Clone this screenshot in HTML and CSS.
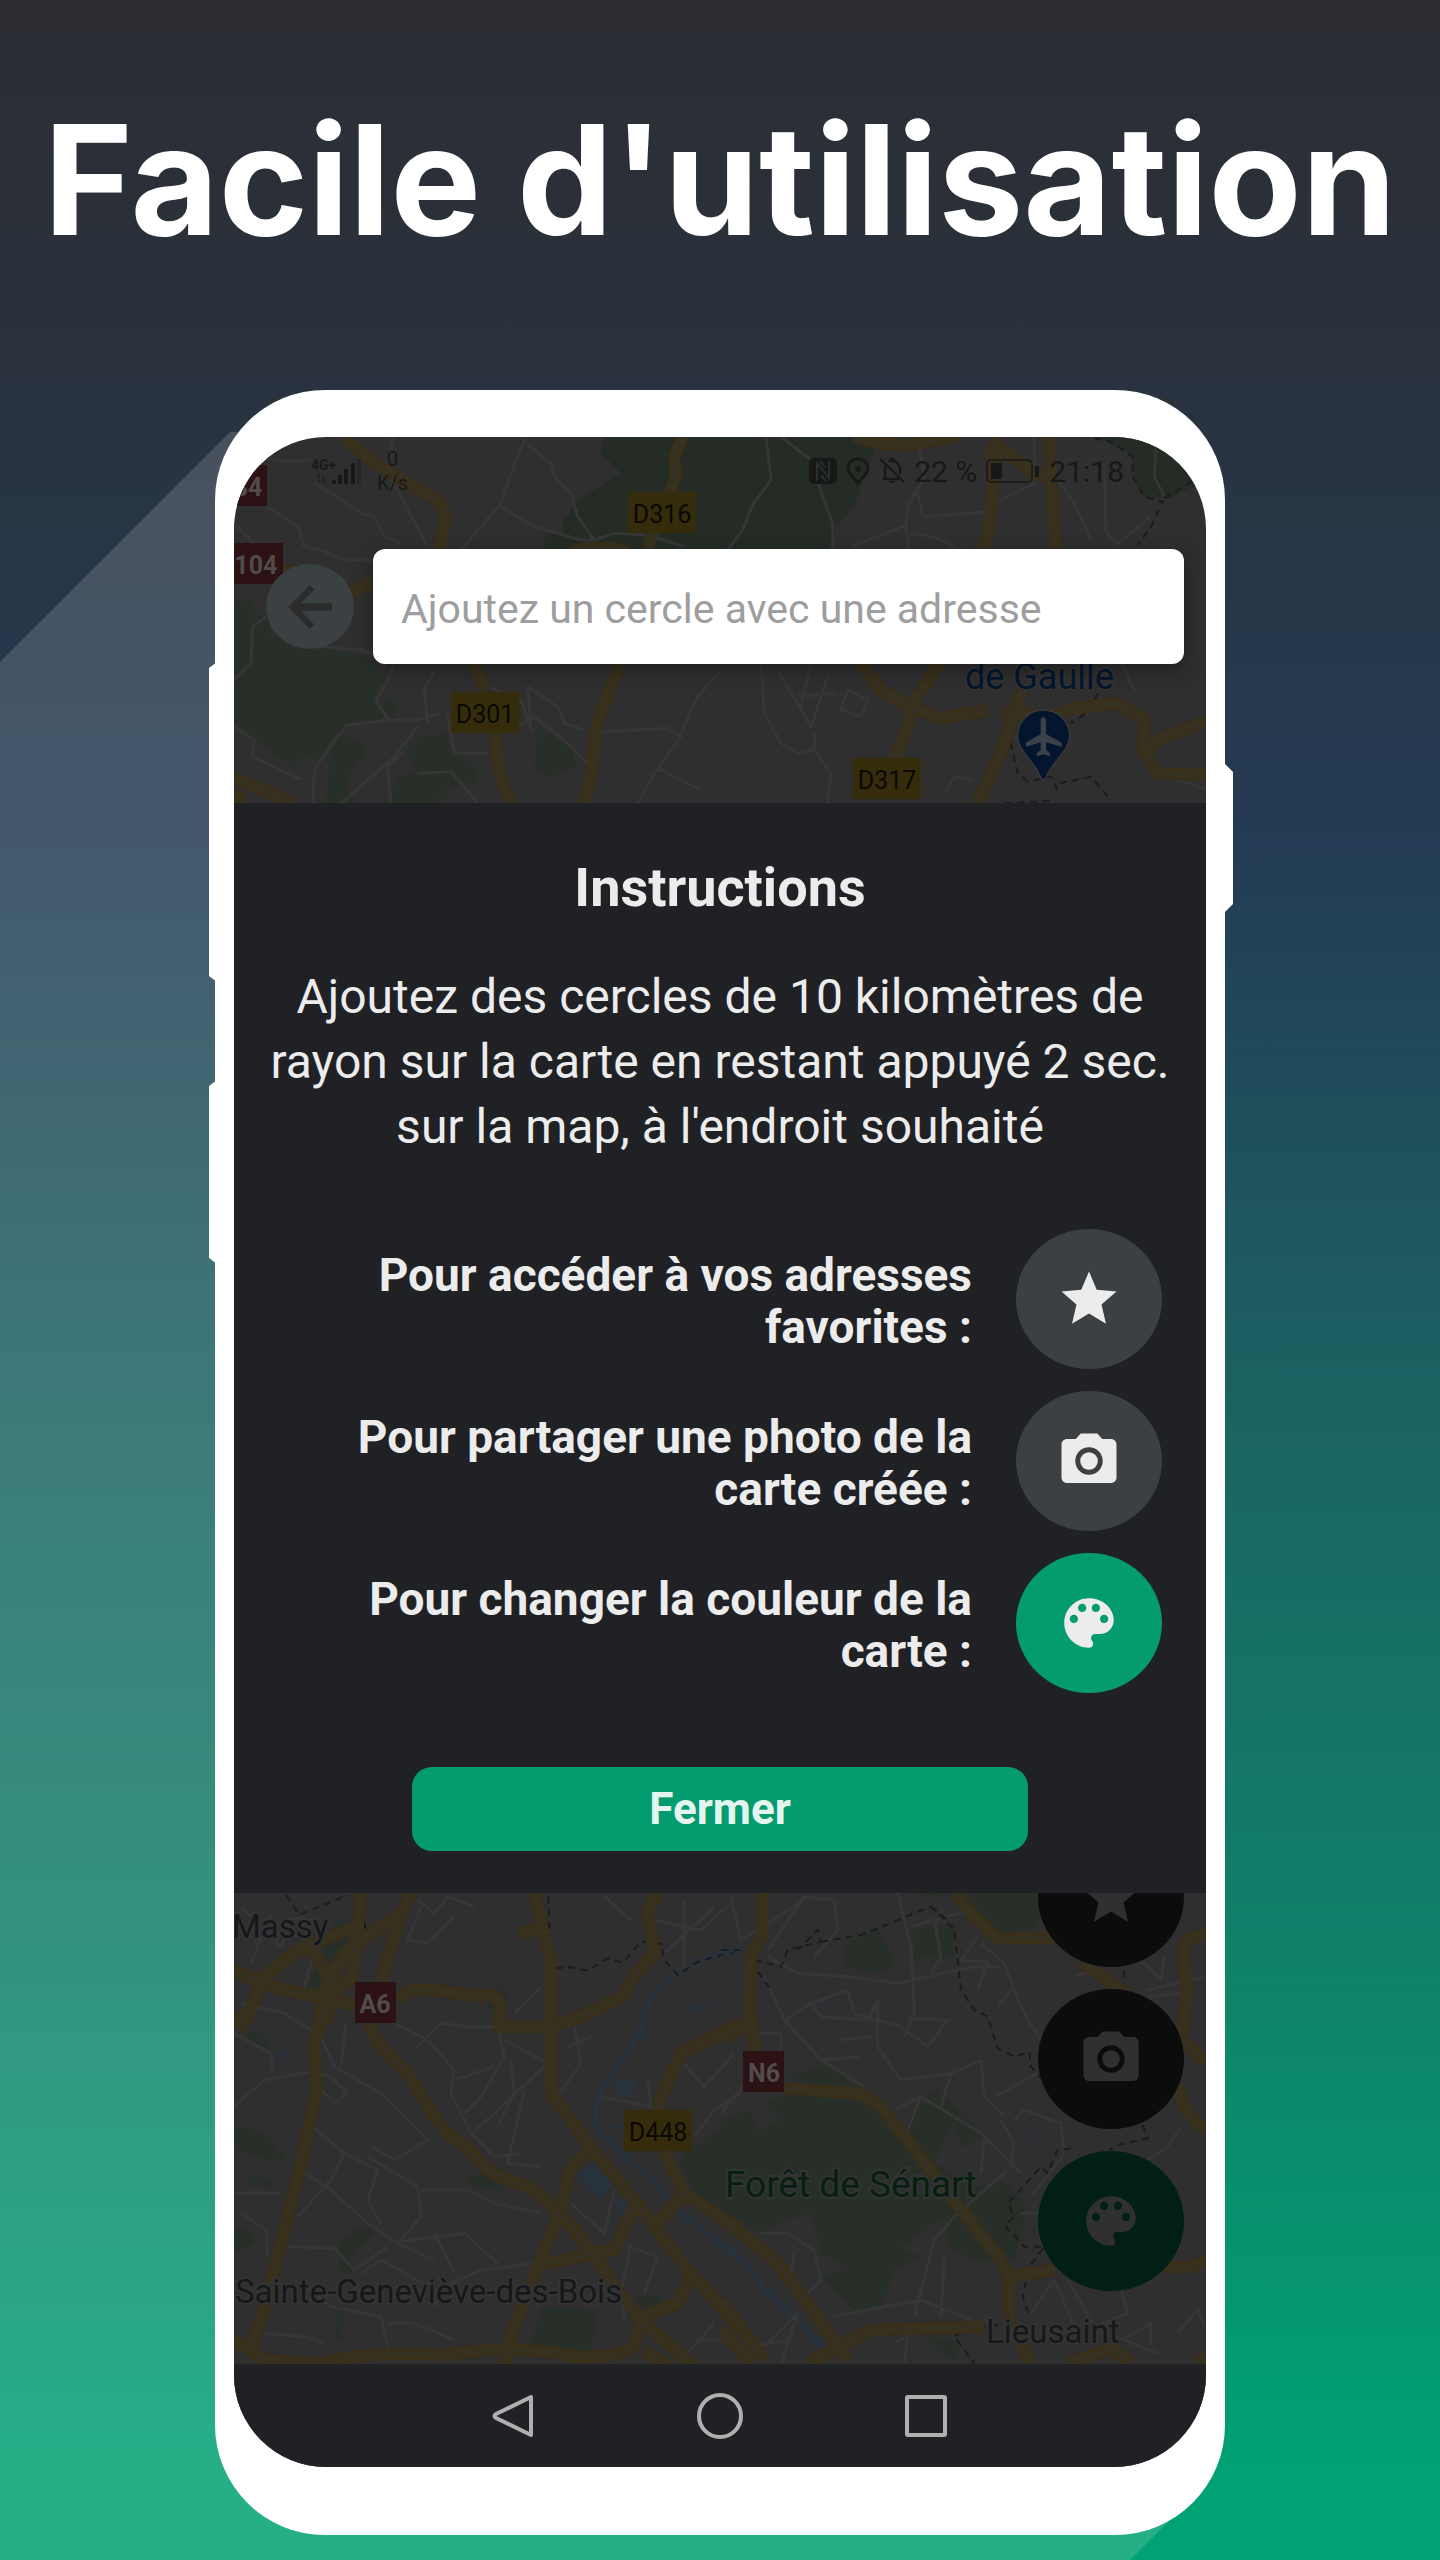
FILE: index.html
```
<!DOCTYPE html>
<html lang="fr">
<head>
    <meta charset="UTF-8">
    <meta name="viewport" content="width=device-width, initial-scale=1.0">
    <title>Facile d'utilisation</title>
    <link rel="stylesheet" href="styles.css">
</head>
<body>
    <!-- shared icons -->
    <svg class="sprite" aria-hidden="true">
        <symbol id="icon-star" viewBox="0 0 24 24">
            <path d="M12 17.27L18.18 21l-1.64-7.03L22 9.24l-7.19-.61L12 2 9.19 8.63 2 9.24l5.46 4.73L5.82 21z"/>
        </symbol>
        <symbol id="icon-camera" viewBox="0 0 24 24">
            <circle cx="12" cy="12" r="3.2"/>
            <path d="M9 2L7.17 4H4c-1.1 0-2 .9-2 2v12c0 1.1.9 2 2 2h16c1.1 0 2-.9 2-2V6c0-1.1-.9-2-2-2h-3.17L15 2H9zm3 15c-2.76 0-5-2.24-5-5s2.24-5 5-5 5 2.24 5 5-2.24 5-5 5z"/>
        </symbol>
        <symbol id="icon-palette" viewBox="0 0 24 24">
            <path d="M12 3c-4.97 0-9 4.03-9 9s4.03 9 9 9c.83 0 1.5-.67 1.5-1.5 0-.39-.15-.74-.39-1.01-.23-.26-.38-.61-.38-.99 0-.83.67-1.5 1.5-1.5H16c2.76 0 5-2.24 5-5 0-4.42-4.03-8-9-8zm-5.5 9c-.83 0-1.5-.67-1.5-1.5S5.67 9 6.5 9 8 9.67 8 10.5 7.33 12 6.5 12zm3-4C8.67 8 8 7.33 8 6.5S8.67 5 9.5 5s1.5.67 1.5 1.5S10.33 8 9.5 8zm5 0c-.83 0-1.5-.67-1.5-1.5S13.67 5 14.5 5s1.5.67 1.5 1.5S15.33 8 14.5 8zm3 4c-.83 0-1.5-.67-1.5-1.5S16.67 9 17.5 9s1.5.67 1.5 1.5-.67 1.5-1.5 1.5z"/>
        </symbol>
    </svg>

    <main class="promo">
        <h1>Facile d'utilisation</h1>

        <div class="phone">
            <span class="side-button volume"></span>
            <span class="side-button power"></span>
            <span class="side-button lock"></span>

            <div class="screen">
                <svg class="map" viewBox="0 0 972 2030" preserveAspectRatio="xMidYMin slice" aria-hidden="true">
                    <!-- main roads, drawn twice: casing then fill -->
                    <defs>
                        <g id="roads-nw">
                            <path d="M425 170Q540 270 690 350Q738 372 730 430L715 510"/>
                            <path d="M1445 170L1420 230 1425 290 1405 340M1355 455L1340 510"/>
                            <path d="M245 567L300 580M445 640L515 605"/>
                            <path d="M820 850L850 930M880 1060L900 1200 930 1275"/>
                            <path d="M1260 850L1190 1020 1175 1150 1150 1275"/>
                            <path d="M98 1195L200 1235 280 1275M98 1235L130 1275"/>
                            <path d="M1110 515Q1190 490 1280 515"/>
                        </g>
                        <g id="roads-ne">
                            <path d="M400 170L480 190 570 198 640 180 720 165"/>
                            <path d="M825 170V215L805 430 790 510M790 215H860L940 285 1000 290M985 170L990 290 1003 510"/>
                            <path d="M420 850L480 930 560 980 660 1015 800 990M655 850L570 980 560 1040 520 1135"/>
                            <path d="M905 920L840 1120 770 1270M840 1000L900 1000 990 1010 1060 985 1190 970 1270 1020 1265 1110 1310 1180 1455 1185M1275 1110L1330 1070 1455 1025"/>
                        </g>
                        <g id="roads-sw">
                            <path d="M38 270Q150 330 290 350L400 375M530 355L570 330 640 330 740 345 820 345 840 380 835 440H990L1090 405 1210 345 1235 290 1300 220 1280 90 1310 38"/>
                            <path d="M575 38L540 100 470 145 370 220 310 330 290 450 280 480 285 640 240 850 140 1250 85 1420M540 100L480 305M420 38L395 290 340 340M395 145L230 210 130 290 90 390 55 450M38 430L90 390M265 205L350 320 310 430"/>
                            <path d="M940 38L960 130 990 240V460L990 640 1100 790 1250 975 1410 1180 1560 1350M890 160L960 150"/>
                            <path d="M448 430Q450 480 560 580Q640 720 690 770Q730 790 790 860Q820 890 910 915Q1010 980 1060 1050Q1140 1150 1190 1230L1260 1320 1420 1460"/>
                            <path d="M1560 430L1380 520 1325 640 1310 690M1330 815L1390 940 1310 1030M1390 940L1560 1050"/>
                            <path d="M1110 805L1045 870 1020 990 960 1130 870 1370 850 1460M950 1155L1180 1110 1240 980M1410 1190L1370 1270 1260 1310 1240 1400Q1150 1450 1010 1420Q840 1395 680 1425Q450 1410 300 1450L130 1440 38 1380M1270 1410L1340 1460"/>
                        </g>
                        <g id="roads-se">
                            <path d="M125 38V170L90 220 85 390 105 510M0 475L90 430"/>
                            <path d="M700 38L760 110 830 175H1000M1080 245L1220 340M1455 165Q1385 170 1385 220L1400 330 1380 480 1455 545M1370 610Q1380 700 1455 750"/>
                            <path d="M192 625L400 640Q460 650 520 730L690 950 840 1140 865 1190V1330L930 1450M865 1190L1000 1170M1320 1160L1400 1162 1455 1145"/>
                            <path d="M0 1010L170 1150 260 1270 380 1440M0 1260L130 1440M260 1450L450 1350 790 1340M0 1350L90 1450M1040 1450L1170 1405 1230 1450M1430 1450L1455 1430"/>
                        </g>
                    </defs>

                    <!-- north west -->
                    <svg x="-33" y="-57" width="520" height="430" viewBox="0 0 1560 1290">
                        <path class="wood" d="M1210 170H1560V510H1025L1035 460 1090 465 1085 430 1130 360 1260 280 1215 235 1198 225Z"/>
                        <path class="park" d="M98 660L150 665 165 710 200 700 210 770 400 810 500 835 540 890 525 960 560 1020 440 1030 400 1080 350 1140 300 1125 275 1165 200 1105 98 1030Z"/>
                        <path class="park" d="M420 1065L495 1090 485 1130 455 1170 430 1215 460 1270H375L390 1110Z"/>
                        <path class="park" d="M615 1115L660 1070 735 1060 750 1110 820 1160 830 1200 740 1230 700 1270H560L590 1190 650 1180Z"/>
                        <path class="park" d="M1010 1040L1100 1080 1130 1160 1040 1195 1000 1160ZM550 950L590 970 580 1020 545 990Z"/>
                        <path class="street" d="M200 235L260 245 330 240M340 310L400 345 480 400 520 410 550 470 600 490M98 430L160 490M200 380L290 440 310 500 360 510 430 540 515 540M575 170L560 280 600 350 680 500M975 170L930 280 900 370 780 510M900 380L1000 440 1140 480 1180 480 1240 460 1340 465 1450 500M975 190L1050 250 1060 290 1110 340 1130 410 1180 480"/>
                        <path class="street" d="M195 710L155 740 150 850 98 900M98 1040L160 1080 155 1130 300 1200M360 800L480 810 580 850 560 900 525 960 560 1020 650 1020 720 1000M700 870L670 930 680 1030M400 1080L440 1035 560 1020M650 1040L580 1130 420 1270M400 1080L340 1170 335 1270M610 1115L560 1160 570 1270M650 1180L750 1175 830 1270M740 1000L760 1120 860 1120M860 920L960 960 990 1050 980 920 1070 980 1090 1030 1150 1050M920 1060L1000 1010 1100 1090 1160 1150M1190 1055L1400 1045 1440 1070 1370 1165 1310 1270M1440 1060L1490 950 1560 870M1370 1165L1500 1230"/>
                        <use class="road-casing" href="#roads-nw"/>
                        <use class="road-fill" href="#roads-nw"/>
                    </svg>

                    <!-- north east -->
                    <svg x="487" y="-57" width="520" height="430" viewBox="0 0 1560 1290">
                        <path class="wood" d="M0 170H475L430 290 400 380 340 450 325 510H0Z"/>
                        <path class="wood" d="M1120 170H1250L1460 270V300L1340 355 1270 350 1240 300 1230 220Z"/>
                        <path class="street" d="M135 170L150 300 95 375 65 450 20 510M180 170L270 240 305 350 335 430V510M595 200L610 290 560 380 555 450 565 510M560 435L390 500M590 340L605 410 800 395M565 460L640 470 720 510M820 370L940 310 940 170M1010 300L1060 370 1110 480M1150 250L1155 460 1190 490 1290 410M1305 210L1300 290 1330 350"/>
                        <path class="street" d="M120 850L130 1000 180 1090 230 1120 280 1110M170 870L270 1040 320 890M230 950L340 940M380 930L440 960 420 1010 360 990ZM270 850L240 980M280 1060V1110L330 1180 320 1270M1200 850L1245 940M1310 1190H1455M1350 1190L1460 1230M670 1240L700 1190 760 1200"/>
                        <path class="border" d="M1120 175L1170 185 1235 230 1235 290 1270 350 1325 365 1290 440 1250 495M1330 355L1420 300M1130 940L1110 990 1050 1030M860 1050L890 1180 920 1205 990 1190 1015 1240M1015 1210L1110 1190 1160 1250M850 1270L1000 1262"/>
                        <use class="road-casing" href="#roads-ne"/>
                        <use class="road-fill" href="#roads-ne"/>
                        <path class="pin" d="M967 990c-43 0-77 34-77 78 0 45 50 75 68 122 4 12 14 12 18 0 18-47 70-77 70-122 0-44-35-78-79-78z"/>
                        <path class="plane" d="M967 1012q-8 0-8 12v38l-44 26v12l44-13v23l-12 10v9l20-6 20 6v-9l-12-10v-23l47 13v-12l-47-26v-38q0-12-8-12z"/>
                    </svg>

                    <!-- south west -->
                    <svg x="-13" y="1443" width="520" height="500" viewBox="0 0 1560 1500">
                        <path class="park" d="M300 200L350 120 400 130 370 200 330 260ZM255 330L290 260 330 300 300 340ZM75 450L130 465 140 500 85 495ZM38 740L120 750 195 835 140 840 38 805ZM65 915L100 880 165 920ZM38 1040L90 1050 100 1090 38 1120ZM355 1090L400 1050 480 1040 400 1120 390 1180 355 1180ZM740 890L800 880 840 930 760 920ZM560 1030L590 980 600 990ZM960 1280L1130 1290 1110 1420 930 1400ZM1560 690L1480 760 1390 820 1370 850 1420 940 1510 1010H1560ZM790 370L850 320 860 350 820 390ZM320 1270L370 1280 360 1380 345 1380 345 1300ZM1230 1250L1310 1245 1330 1280 1270 1285Z"/>
                        <path class="water" d="M1385 395L1480 360 1430 400ZM1180 605L1250 598 1230 650 1180 640ZM1070 880L1115 850 1175 905 1140 960 1110 930ZM1170 950L1240 985 1200 1010ZM175 520L195 512 200 535 185 542ZM1165 735L1205 730 1195 755ZM1250 465L1290 460 1270 480Z"/>
                        <path class="river" d="M1560 205Q1400 240 1340 300Q1270 370 1265 430Q1240 500 1150 620Q1100 700 1140 760L1300 910 1380 1000 1560 1140"/>
                        <path class="street" d="M60 80L180 200 200 150M38 160L250 110M90 250L150 100M590 60L640 100 680 50 760 80M600 80L560 180 620 190 700 110M1150 50L1230 120M1390 60V260M1300 120L1440 150 1540 60M1330 220L1480 80M280 220L240 350M60 370L190 400 300 470M38 460L150 520 155 570M38 680L130 600 270 575 330 590 380 640 340 670 300 630M300 470L340 560 480 640 620 780 520 840 450 800M375 430L360 560M500 420L620 480 700 570 690 640 750 760 820 830 900 820M580 510L660 430 740 440H830L850 530 780 650 730 700M700 600L820 560M850 480L980 550 820 700 750 760M870 540L880 640 830 740M910 630L860 850 960 860M1060 440L1080 550 1010 650M1040 500L1110 470M880 400L960 320"/>
                        <path class="street" d="M250 720L370 820 330 900 230 1010M245 875L330 930 440 1030 530 1090 640 1140M370 820L470 870 440 960 480 1030M530 1090L600 1010 590 920 440 830M600 930L740 930 820 970 960 1000M530 1085L730 1060 830 1150M640 1060L700 1180M200 1100L340 1105 400 1170 500 1100M38 940H180M60 1000L135 1050 140 1130M420 1180L480 1140 640 1230 780 1170 940 1150M220 1200L330 1280 480 1310 500 1400M500 1330H580L700 1380M640 1280L680 1210M130 1360L250 1370 310 1390M1050 970L1150 1060 1180 930M1220 1100L1310 1130 1270 1240M1230 1090L1200 1240 1210 1310M1140 650L1290 680 1280 590M1420 770L1480 690 1560 640M1380 540L1450 620 1540 520M1440 1380H1540M1400 1420L1480 1330"/>
                        <path class="border" d="M195 45L235 105 380 45M415 50L435 155 520 140 550 60M982 50L990 265 1050 262 1100 272 1160 235 1205 248 1260 185 1325 192 1325 235 1370 285 1430 245 1560 208"/>
                        <use class="road-casing" href="#roads-sw"/>
                        <use class="road-fill" href="#roads-sw"/>
                    </svg>

                    <!-- south east -->
                    <svg x="487" y="1443" width="520" height="500" viewBox="0 0 1560 1500">
                        <path class="park" d="M540 38L720 50 730 110 830 160 920 150 970 100V38ZM575 150L700 130V235H580ZM370 190L470 150 520 230 500 270 430 280 375 260ZM200 590L330 550 400 620 300 625Z"/>
                        <path class="park" d="M0 720L90 690 110 760 180 720 130 670 200 640 400 640 540 760 600 660 650 630 800 770 720 800 700 720 640 850 770 920 850 905 920 980 880 1140 760 1140 690 1110 670 1010 600 1060 540 1100 600 1130 520 1170 480 1290 400 1290 300 1190 380 1160 300 1120 270 1000 200 1020 110 1060 0 980ZM610 1370L710 1380 700 1440 640 1400Z"/>
                        <path class="river" d="M0 1090Q80 1140 130 1230Q210 1290 320 1420"/>
                        <path class="river thin" d="M910 730L950 795M510 345L540 390M220 365L240 372M285 370L320 362M0 220L70 205M10 50L40 100"/>
                        <path class="street" d="M30 50L60 180 250 60M140 210L250 50 340 60 350 150 280 230M140 230L230 280 380 290 530 310 760 260 840 260M530 38L570 200 580 400 550 470M640 120L660 230 630 280M570 140L730 95M770 170L720 240 800 245 770 330M780 190L850 250 880 330 920 420 960 480M870 330L830 380M130 290L190 420 300 540 430 620M190 420L270 370 380 330 400 400 540 440 620 500 680 420 560 415M270 370L300 410 440 420 470 360M470 360V500L540 600 690 580 660 680M100 460H180V540M300 540L420 530M350 480L450 470M690 580L780 540 790 650 850 710M0 700L80 600M520 690L600 650 780 760 900 880M600 650L560 750M790 780L780 880M840 720L880 790 870 850M820 650L950 580M880 720L910 690 1020 730 1030 820 970 900 930 950"/>
                        <path class="street" d="M860 870L700 1010 640 1080 580 1310M120 1060L200 1060 280 1110 300 1200 250 1250M330 1310L520 1275 600 1260 750 1320M670 1130L660 1310M220 1110L210 1190M900 1000L960 1000M930 1300L1000 1200 1060 1340M1040 1200L1120 1340 1220 1300 1200 1230M1200 1380L1290 1330 1290 1400M1210 1380L1310 1420M1260 240L1320 300 1330 230M1280 330L1450 290M1280 350L1380 340M1380 740L1340 800 1280 840M130 1400L230 1300 180 1450M90 1400L210 1380M520 1390L560 1370 550 1450M1370 1360L1430 1290 1450 1340M1060 290L1110 270"/>
                        <path class="border" d="M0 210L80 210 100 260 155 335M100 240L180 260 200 210 300 185 290 150 230 210M300 185L420 165 630 80 650 100 700 150 720 330 760 390 800 410 830 505 880 530 925 515 930 560 960 595M630 80L680 120M1265 735L1280 775 1190 795 1165 810M1050 805L1010 810 980 880 960 860 880 950 860 970 880 1010 850 1035 910 1100 970 1100 925 1160 905 1250 925 1310M870 1330L740 1345 700 1370 760 1450M1210 270L1205 330"/>
                        <use class="road-casing" href="#roads-se"/>
                        <use class="road-fill" href="#roads-se"/>
                    </svg>

                    <!-- road numbers -->
                    <rect class="shield" x="394" y="55" width="68" height="41"/>
                    <text class="shield-text" x="428" y="86">D316</text>
                    <rect class="shield" x="217" y="255" width="68" height="41"/>
                    <text class="shield-text" x="251" y="286">D301</text>
                    <rect class="shield" x="619" y="321" width="68" height="41"/>
                    <text class="shield-text" x="653" y="352">D317</text>
                    <rect class="shield" x="390" y="1673" width="68" height="41"/>
                    <text class="shield-text" x="424" y="1704">D448</text>
                    <rect class="shield red" x="-35" y="28" width="68" height="41"/>
                    <text class="shield-text red" x="14" y="59">84</text>
                    <rect class="shield red" x="-20" y="106" width="69" height="41"/>
                    <text class="shield-text red" x="13" y="137">N104</text>
                    <rect class="shield red" x="121" y="1545" width="41" height="41"/>
                    <text class="shield-text red" x="141" y="1576">A6</text>
                    <rect class="shield red" x="509" y="1614" width="41" height="41"/>
                    <text class="shield-text red" x="530" y="1645">N6</text>

                    <!-- places -->
                    <text class="place airport" x="731" y="252">de Gaulle</text>
                    <text class="place" x="-2" y="1501">Massy</text>
                    <text class="place" x="1" y="1866">Sainte-Geneviève-des-Bois</text>
                    <text class="place forest" x="491" y="1760">Forêt de Sénart</text>
                    <text class="place" x="752" y="1906">Lieusaint</text>
                </svg>

                <header class="top">
                    <div class="status-bar">
                        <svg width="52" height="32" viewBox="0 0 52 32">
                            <text class="network" x="0" y="15">4G+</text>
                            <path d="M8 19v9M12 28v-7M6 21l2-2M12 28l3-3" fill="none" stroke="#262626" stroke-width="2"/>
                            <path d="M21 25h4v4h-4zM27 20h4v9h-4zM33 14h4v15h-4zM40 8h4v21h-4z"/>
                            <path d="M46 4h4v25h-4z" fill="#262626"/>
                        </svg>
                        <div class="speed">0<br>K/s</div>
                        <div class="status-right">
                            <svg width="28" height="28" viewBox="0 0 28 28">
                                <rect x="0" y="1" width="28" height="26" rx="5"/>
                                <path d="M8 24V6l12 15V4M11 4l5 6M17 24l-5-6" fill="none" stroke="#293029" stroke-width="2"/>
                            </svg>
                            <svg width="24" height="28" viewBox="0 0 24 28">
                                <path d="M12 2c-6 0-10 4-10 9 0 6 6 9 10 15 4-6 10-9 10-15 0-5-4-9-10-9z" fill="none" stroke="#181818" stroke-width="3"/>
                                <circle cx="12" cy="12" r="3"/>
                            </svg>
                            <svg width="26" height="28" viewBox="0 0 26 28">
                                <path d="M1 2l24 23M4 22h17M6 21v-8q0-3 1-4M10 5q3-2 7 0 4 3 4 8v4M11 5V3q2-3 4 0v2" fill="none" stroke="#181818" stroke-width="2.4"/>
                                <path d="M9 24h8q-4 4-8 0z"/>
                            </svg>
                            <span>22 %</span>
                            <svg width="54" height="28" viewBox="0 0 54 28">
                                <rect x="1" y="3" width="45" height="22" rx="4" fill="none" stroke="#181818" stroke-width="1.5"/>
                                <path d="M5 6h11v16H5zM49 9h4v11h-4z"/>
                            </svg>
                            <span>21:18</span>
                        </div>
                    </div>

                    <form class="search">
                        <button type="button" class="back" aria-label="Retour">
                            <svg viewBox="0 0 24 24"><path d="M20 10.6H8.6l5-5L12 4l-8 8 8 8 1.6-1.6-5-5H20z"/></svg>
                        </button>
                        <input type="text" aria-label="Adresse" placeholder="Ajoutez un cercle avec une adresse">
                    </form>
                </header>

                <section class="instructions">
                    <h2>Instructions</h2>
                    <p>Ajoutez des cercles de 10 kilomètres de rayon sur la carte en restant appuyé 2 sec. sur la map, à l'endroit souhaité</p>

                    <ul>
                        <li>
                            <span class="hint">Pour accéder à vos adresses favorites&nbsp;:</span>
                            <span class="round"><svg><use href="#icon-star"/></svg></span>
                        </li>
                        <li>
                            <span class="hint">Pour partager une photo de la carte&nbsp;créée&nbsp;:</span>
                            <span class="round"><svg><use href="#icon-camera"/></svg></span>
                        </li>
                        <li>
                            <span class="hint">Pour changer la couleur de la carte&nbsp;:</span>
                            <span class="round green"><svg><use href="#icon-palette"/></svg></span>
                        </li>
                    </ul>

                    <button type="button" class="close">Fermer</button>
                </section>

                <div class="bottom">
                    <div class="map-actions">
                        <button type="button" class="round" aria-label="Favoris"><svg><use href="#icon-star"/></svg></button>
                        <button type="button" class="round" aria-label="Photo"><svg><use href="#icon-camera"/></svg></button>
                        <button type="button" class="round green" aria-label="Couleur"><svg><use href="#icon-palette"/></svg></button>
                    </div>
                </div>

                <nav class="android-nav">
                    <button type="button" aria-label="Précédent">
                        <svg viewBox="0 0 46 46"><path d="M40 4v38L5 25q-3-2 0-4z"/></svg>
                    </button>
                    <button type="button" aria-label="Accueil">
                        <svg viewBox="0 0 46 46"><circle cx="23" cy="23" r="21"/></svg>
                    </button>
                    <button type="button" aria-label="Applications récentes">
                        <svg viewBox="0 0 46 46"><rect x="4" y="4" width="38" height="38" rx="1"/></svg>
                    </button>
                </nav>
            </div>
        </div>
    </main>
</body>
</html>
```
FILE: styles.css
```
:root {
    --green: #049c6e;
    --panel: #202125;
    --text: #ececec;
    --status: #181818;
}

* {
    box-sizing: border-box;
}

body {
    margin: 0;
    font-family: Roboto, "Liberation Sans", sans-serif;
    background: #2c2d33;
}

button {
    border: none;
    padding: 0;
    font-family: inherit;
    cursor: pointer;
}

.sprite {
    display: none;
}

.promo {
    position: relative;
    z-index: 0;
    min-height: 100vh;
    padding: 80px 0 25px;
    overflow: hidden;
    background: linear-gradient(180deg, #2c2d33 0%, #2a313b 12%, #233b54 33%, #1c6062 53%, #108069 76%, #00a273 97%);
}

/* long shadow behind the phone */
.promo::before {
    content: '';
    position: absolute;
    inset: 0;
    z-index: -1;
    background: rgba(255, 255, 255, 0.15);
    clip-path: polygon(0 662px, 230px 432px, 50% 432px, 50% 50%, calc(100% - 260px) calc(100% - 400px), calc(100% - 240px) calc(100% - 70px), calc(100% - 310px) 100%, 0 100%);
}

h1 {
    margin: 0 0 110px;
    color: #fff;
    font-family: Inter, Lato, sans-serif;
    font-size: 152px;
    font-weight: 700;
    line-height: 200px;
    text-align: center;
}

.phone {
    position: relative;
    width: 94%;
    max-width: 1010px;
    margin: 0 auto;
    padding: 47px 19px 68px;
    background: #fff;
    border-radius: 110px;
}

.side-button {
    position: absolute;
    left: -6px;
    width: 8px;
    background: #fff;
    clip-path: polygon(0 6px, 100% 0, 100% 100%, 0 calc(100% - 6px));
}

.volume {
    top: 272px;
    height: 320px;
}

.power {
    top: 690px;
    height: 184px;
}

.lock {
    top: 372px;
    left: auto;
    right: -8px;
    height: 152px;
    width: 10px;
    clip-path: polygon(0 0, 100% 10px, 100% calc(100% - 10px), 0 100%);
}

.screen {
    position: relative;
    overflow: hidden;
    border-radius: 92px;
    background: #2f2f2f;
}

/* map */
.map {
    position: absolute;
    inset: 0;
    width: 100%;
    height: 100%;
}

.wood {
    fill: #242c25;
}

.park {
    fill: #282f29;
}

.water {
    fill: #28333d;
}

.river {
    fill: none;
    stroke: #28333d;
    stroke-width: 16;
}

.river.thin {
    stroke-width: 7;
}

.street {
    fill: none;
    stroke: #363636;
    stroke-width: 9;
    stroke-linejoin: round;
}

.border {
    fill: none;
    stroke: #1c1c1c;
    stroke-width: 6;
    stroke-dasharray: 22 16;
}

.road-casing {
    fill: none;
    stroke: #3b2f17;
    stroke-width: 36;
    stroke-linejoin: round;
}

.road-fill {
    fill: none;
    stroke: #37321f;
    stroke-width: 22;
    stroke-linejoin: round;
}

.pin {
    fill: #04162e;
    stroke: #3a3a3a;
    stroke-width: 4;
}

.plane {
    fill: #3b4148;
}

.shield {
    fill: #352c0b;
}

.shield.red {
    fill: #2c1214;
}

.shield-text {
    fill: #0a0904;
    font-size: 25px;
    text-anchor: middle;
}

.shield-text.red {
    fill: #514b4b;
    font-weight: 700;
}

.place {
    fill: #15181b;
    stroke: #333;
    stroke-width: 4px;
    paint-order: stroke;
    font-size: 33px;
}

.place.airport {
    fill: #04162e;
    font-size: 36px;
}

.place.forest {
    fill: #051f10;
    font-size: 37px;
}

/* top of the screen */
.top {
    position: relative;
    min-height: 366px;
    padding-top: 10px;
}

.status-bar {
    display: flex;
    align-items: center;
    padding: 0 82px 0 77px;
    color: var(--status);
    fill: var(--status);
    font-size: 30px;
}

.network {
    font-size: 14px;
    font-weight: 700;
}

.speed {
    margin-left: 14px;
    font-size: 20px;
    line-height: 24px;
    text-align: center;
}

.status-right {
    display: flex;
    align-items: center;
    gap: 9px;
    margin-left: auto;
}

.search {
    display: flex;
    align-items: center;
    gap: 19px;
    margin-top: 54px;
    padding: 0 22px 0 32px;
}

.back {
    width: 88px;
    height: 85px;
    border-radius: 50%;
    background: #3b4042;
}

.back svg {
    display: block;
    width: 66px;
    height: 66px;
    margin: 0 auto;
    fill: #2b2b2b;
}

.search input {
    flex: 1;
    min-width: 0;
    height: 115px;
    padding: 4px 28px 0;
    border: none;
    border-radius: 12px;
    background: #fff;
    box-shadow: 0 6px 20px rgba(0, 0, 0, 0.35);
    font-family: inherit;
    font-size: 41px;
}

.search input::placeholder {
    color: #9e9e9e;
    opacity: 1;
}

/* instructions */
.instructions {
    position: relative;
    z-index: 1;
    padding: 53px 24px 42px;
    background: var(--panel);
    color: var(--text);
    text-align: center;
}

.instructions h2 {
    margin: 0 0 44px;
    font-size: 54px;
    line-height: 64px;
}

.instructions p {
    margin: 0 0 70px;
    font-size: 48px;
    line-height: 65px;
}

.instructions ul {
    display: flex;
    flex-direction: column;
    gap: 22px;
    margin: 0 0 74px;
    padding: 0 20px;
    list-style: none;
}

.instructions li {
    display: flex;
    align-items: center;
    justify-content: flex-end;
    gap: 44px;
    font-size: 46px;
    font-weight: 700;
    line-height: 52px;
    text-align: right;
}

.hint {
    padding-top: 4px;
}

.round {
    display: flex;
    flex: none;
    align-items: center;
    justify-content: center;
    width: 146px;
    height: 140px;
    border-radius: 50%;
    background: #3c4043;
    fill: var(--text);
}

.round.green {
    background: var(--green);
}

.round svg {
    width: 66px;
    height: 66px;
}

.close {
    width: 616px;
    max-width: 100%;
    height: 84px;
    border-radius: 20px;
    background: var(--green);
    color: #e4f5ee;
    font-size: 44px;
    font-weight: 700;
}

/* dimmed buttons over the map */
.bottom {
    position: relative;
    height: 471px;
}

.map-actions {
    position: absolute;
    right: 22px;
    bottom: 73px;
    display: flex;
    flex-direction: column;
    gap: 22px;
}

.map-actions .round {
    background: #0b0d0d;
    fill: #303030;
}

.map-actions .round.green {
    background: #011f17;
}

.android-nav {
    position: relative;
    display: flex;
    justify-content: center;
    gap: 160px;
    padding: 29px 0 28px;
    background: var(--panel);
}

.android-nav button {
    background: none;
}

.android-nav svg {
    display: block;
    width: 46px;
    height: 46px;
    fill: none;
    stroke: #b0b0b0;
    stroke-width: 4;
    stroke-linejoin: round;
}
```
